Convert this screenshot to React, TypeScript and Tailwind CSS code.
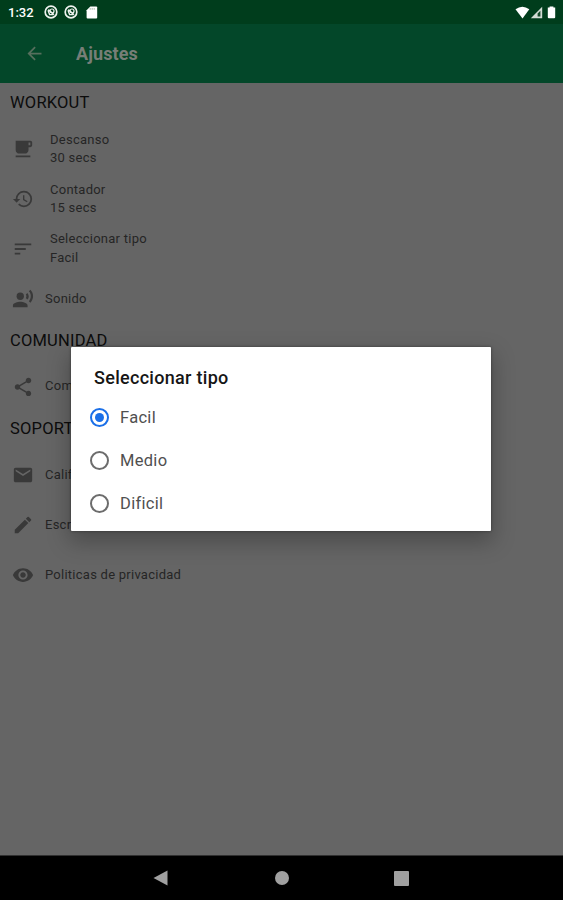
import { useState } from 'react'
import type { IconType } from 'react-icons'
import {
  MdArrowBack,
  MdEdit,
  MdEmail,
  MdHistory,
  MdLocalCafe,
  MdRecordVoiceOver,
  MdRemoveRedEye,
  MdShare,
  MdSort,
} from 'react-icons/md'

const TYPES = ['Facil', 'Medio', 'Dificil']

function Row({ icon: Icon, label, value }: { icon: IconType; label: string; value?: string }) {
  return (
    <div className="h-[49.8px] flex items-center pl-3">
      <Icon size={22} className="text-[#393939] shrink-0" />
      <div
        className={`text-[13px] leading-[18.5px] tracking-[0.25px] text-[#252525] whitespace-nowrap ${
          value ? 'ml-4' : 'ml-[11px]'
        }`}
      >
        <p>{label}</p>
        {value && <p>{value}</p>}
      </div>
    </div>
  )
}

function Section({ title }: { title: string }) {
  return (
    <h2 className="h-[39px] pl-2.5 pt-[10px] text-[16.5px] leading-5 tracking-[0.2px] text-[#0c0c0c]">
      {title}
    </h2>
  )
}

// Round status bar badge
function Badge() {
  return (
    <svg width="14" height="14" viewBox="0 0 14 14" fill="none" stroke="#eef3ef">
      <circle cx="7" cy="7" r="5.8" strokeWidth="1.7" />
      <path d="M4 5.2 5.6 9.6h4M4.4 4.4 10 9.8" strokeWidth="1.4" />
      <circle cx="8" cy="6" r="2" strokeWidth="1.2" />
    </svg>
  )
}

function StatusBar() {
  return (
    <div className="h-6 shrink-0 bg-[#003d1c] flex items-center pl-2 pr-[7px] text-white">
      <span className="text-[13px] font-medium w-[26px] leading-4 mt-[1px]">1:32</span>
      <div className="flex items-center ml-[10px] gap-[6px]">
        <Badge />
        <Badge />
        <svg width="12" height="13" viewBox="0 0 12 13" className="ml-[2px]">
          <path d="M4.3.5h5.9q1 0 1 1v10q0 1-1 1H1.6q-1 0-1-1V4.3z" fill="#fff" />
          <path d="M4.2 2v1.8M6.2 2v1.8M8.2 2v1.8" stroke="#8aa38f" strokeWidth=".7" />
        </svg>
      </div>
      <div className="flex items-center ml-auto">
        <svg width="15" height="13" viewBox="0 0 15 13">
          <path d="M.5 3.2Q7.3-1.8 14.3 3.2L7.5 12.4z" fill="#fff" />
        </svg>
        <svg width="13" height="13" viewBox="0 0 13 13">
          <path d="M12.2.8v11.4H.8z" fill="#d3dcd5" />
          <path d="M10.4 4.8v5.7H7.6V7.6z" fill="#174a2c" />
        </svg>
        <svg width="9" height="13" viewBox="0 0 9 13" className="ml-[4px]">
          <path d="M2.6.5h3.8v1.1h1.8v9.7q0 1-1 1H1.8q-1 0-1-1V1.6h1.8z" fill="#fff" />
        </svg>
      </div>
    </div>
  )
}

export default function App() {
  const [selected, setSelected] = useState('Facil')

  return (
    <div className="relative w-[563px] h-[900px] overflow-hidden flex flex-col bg-[#656565] font-['Roboto',sans-serif]">
      <StatusBar />

      {/* App bar */}
      <header className="h-[59px] shrink-0 bg-[#034729] flex items-center pl-6 text-[#777e77]">
        <MdArrowBack size={21} className="text-[#566f5d]" />
        <h1 className="ml-[31px] mt-[1px] text-[18px] leading-5 tracking-[0.1px] font-bold">Ajustes</h1>
      </header>

      {/* Settings */}
      <main className="flex-1">
        <Section title="WORKOUT" />
        <div className="h-[2.5px]" />
        <Row icon={MdLocalCafe} label="Descanso" value="30 secs" />
        <Row icon={MdHistory} label="Contador" value="15 secs" />
        <Row icon={MdSort} label="Seleccionar tipo" value="Facil" />
        <Row icon={MdRecordVoiceOver} label="Sonido" />
        <div className="-mt-[3px] mb-[2px]">
          <Section title="COMUNIDAD" />
        </div>
        <Row icon={MdShare} label="Compartir" />
        <div className="-mt-[2px] mb-[2px]">
          <Section title="SOPORTE" />
        </div>
        <Row icon={MdEmail} label="Calificar" />
        <Row icon={MdEdit} label="Escribenos" />
        <Row icon={MdRemoveRedEye} label="Politicas de privacidad" />
      </main>

      {/* Android navigation */}
      <nav className="h-[45px] shrink-0 bg-black border-t border-[#303030] flex items-center pl-[153px]">
        <svg width="15" height="16" viewBox="0 0 15 16">
          <path d="M.5 8 14.5.5v15z" fill="#a0a0a0" />
        </svg>
        <div className="w-[14px] h-[14px] rounded-full bg-[#a0a0a0] ml-[107px]" />
        <div className="w-[15px] h-[15px] rounded-[1px] bg-[#a0a0a0] ml-[105px]" />
      </nav>

      {/* Dialog */}
      <div
        role="dialog"
        className="absolute left-[71px] top-[347px] w-[420px] h-[184px] bg-white rounded-[1px] shadow-[0_9px_22px_2px_rgba(0,0,0,0.26),0_0_3px_rgba(0,0,0,0.4)]"
      >
        <h3 className="h-[49px] pt-[21px] pl-[23px] text-[18px] leading-5 tracking-[0.3px] font-medium text-[#161616]">
          Seleccionar tipo
        </h3>
        <div role="radiogroup">
          {TYPES.map((type) => (
            <button
              key={type}
              role="radio"
              aria-checked={selected === type}
              onClick={() => setSelected(type)}
              className="h-[43px] w-full flex items-center pl-[19px] text-[16.5px] leading-5 tracking-[0.3px] text-[#505050]"
            >
              <span
                className={`w-[19px] h-[19px] rounded-full border-2 flex items-center justify-center mr-[11px] ${
                  selected === type ? 'border-[#1a6fe8]' : 'border-[#6c6c6c]'
                }`}
              >
                {selected === type && <span className="w-[9px] h-[9px] rounded-full bg-[#1a6fe8]" />}
              </span>
              {type}
            </button>
          ))}
        </div>
      </div>
    </div>
  )
}
